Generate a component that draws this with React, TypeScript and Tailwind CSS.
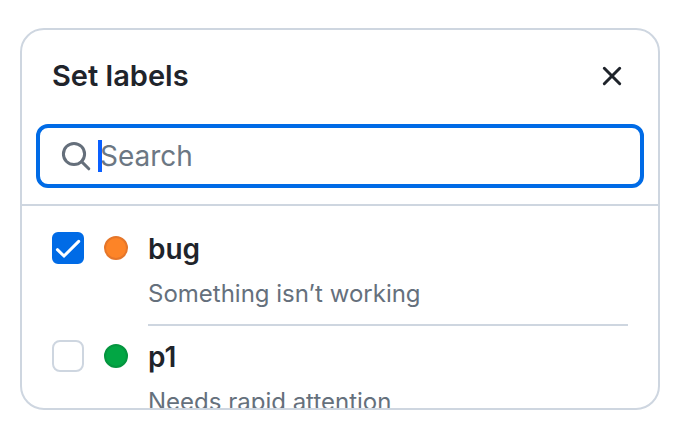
import { useState } from "react";

type Label = {
  id: string;
  name: string;
  description: string;
  swatch: string;
};

const LABELS: Label[] = [
  { id: "bug", name: "bug", description: "Something isn’t working", swatch: "bg-[#fd8427] border-[#e5762a]" },
  { id: "p1", name: "p1", description: "Needs rapid attention", swatch: "bg-[#02a644] border-[#05953f]" },
];

function SearchIcon() {
  return (
    <svg className="size-8 shrink-0" viewBox="0 0 32 32" fill="none" stroke="#656f7b" strokeWidth="3" aria-hidden="true">
      <circle cx="14" cy="14" r="10.6" />
      <path d="M21.6 21.6 L28.8 28.8" strokeLinecap="round" />
    </svg>
  );
}

function LabelRow({ label, checked, last, onToggle }: { label: Label; checked: boolean; last: boolean; onToggle: () => void }) {
  return (
    <li className="flex gap-5 px-[30px]">
      <span className="relative mt-3.5 size-8 shrink-0">
        <input
          id={label.id}
          type="checkbox"
          checked={checked}
          onChange={onToggle}
          className="block size-8 appearance-none rounded-lg border-2 border-[#ced6e0] bg-white checked:rounded-md checked:border-[#006be6] checked:bg-[#006be6]"
        />
        {checked && (
          <svg className="pointer-events-none absolute inset-0" viewBox="0 0 32 32" fill="none" stroke="#fff" strokeWidth="3" strokeLinecap="round" strokeLinejoin="miter" aria-hidden="true">
            <path d="M5.4 17.7 L12 24 L26.7 9.4" />
          </svg>
        )}
      </span>
      <span className={`mt-[18px] size-6 shrink-0 rounded-full border-2 ${label.swatch}`} />
      <label htmlFor={label.id} className={`block grow py-3.5 ${last ? "" : "border-b-2 border-[#ced6e0]"}`}>
        <span className="block text-[28px] leading-[34px] font-semibold text-[#1f242b]">{label.name}</span>
        <span className="mt-3 block text-2xl leading-8 text-[#65707c]">{label.description}</span>
      </label>
    </li>
  );
}

export default function App() {
  const [query, setQuery] = useState("");
  const [selected, setSelected] = useState<string[]>(["bug"]);
  const toggle = (id: string) =>
    setSelected((ids) => (ids.includes(id) ? ids.filter((other) => other !== id) : [...ids, id]));

  return (
    <main className="bg-white px-5 pt-7 font-['Inter','Liberation_Sans',sans-serif]">
      <section className="overflow-hidden rounded-3xl border-2 border-[#ced6e0] bg-white" aria-labelledby="title">
        <header className="flex items-center justify-between pt-7 pr-7 pb-[30px] pl-[30px]">
          <h1 id="title" className="text-[29px] leading-9 font-semibold text-[#1f242b]">
            Set labels
          </h1>
          <button type="button" aria-label="Close" className="flex size-9 items-center justify-center">
            <svg className="size-8" viewBox="0 0 32 32" fill="none" stroke="#1f242b" strokeWidth="3" strokeLinecap="round" aria-hidden="true">
              <path d="M8.3 8.3 L23.7 23.7 M23.7 8.3 L8.3 23.7" />
            </svg>
          </button>
        </header>
        <div className="border-b-2 border-[#ced6e0] px-3.5 pb-4">
          <div className="flex h-16 items-center rounded-xl border-4 border-[#006be6] pl-5">
            <SearchIcon />
            <div className="relative ml-1.5 grow">
              {query === "" && <span className="pointer-events-none absolute inset-y-0 left-0 w-1 bg-[#0a60ff]" />}
              <input
                type="text"
                aria-label="Search"
                placeholder="Search"
                value={query}
                onChange={(event) => setQuery(event.target.value)}
                className="block h-8 w-full pl-0.5 text-[28px] text-[#1f242b] outline-none placeholder:text-[#6c7783]"
              />
            </div>
          </div>
        </div>
        <ul className="max-h-[202px] overflow-hidden pt-3">
          {LABELS.map((label, index) => (
            <LabelRow
              key={label.id}
              label={label}
              checked={selected.includes(label.id)}
              last={index === LABELS.length - 1}
              onToggle={() => toggle(label.id)}
            />
          ))}
        </ul>
      </section>
    </main>
  );
}
